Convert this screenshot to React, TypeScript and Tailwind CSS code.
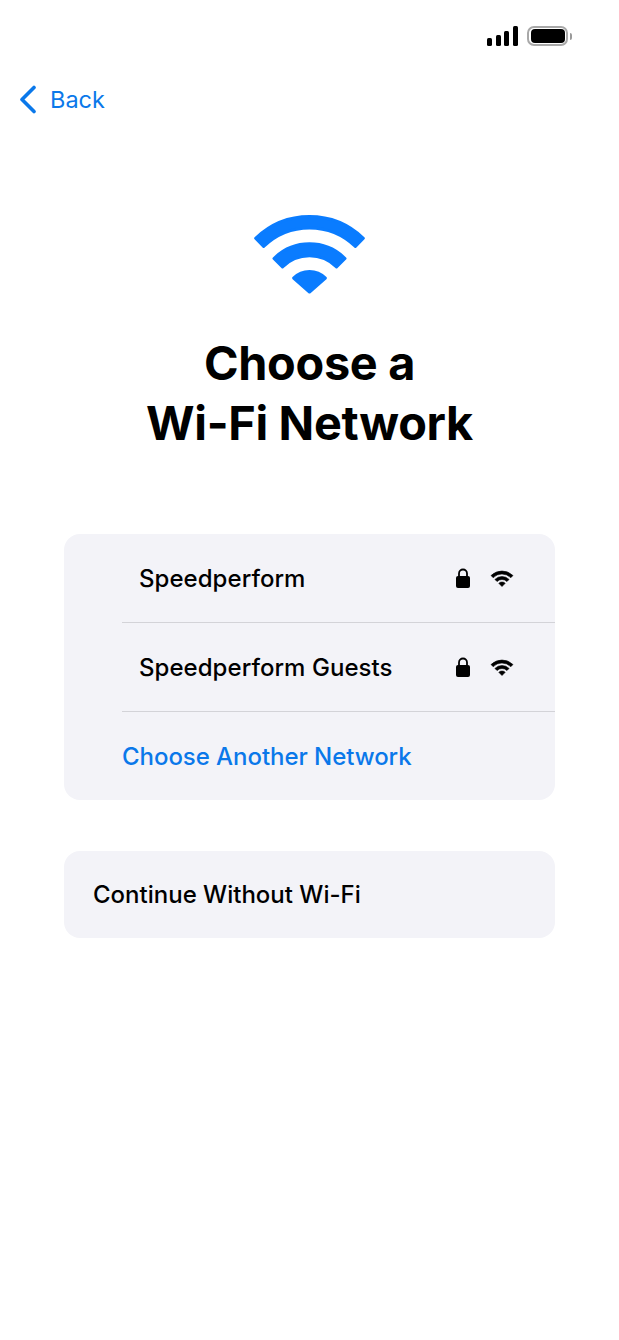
const font = { fontFamily: 'Inter, "Liberation Sans", sans-serif' };

function StatusBar() {
  return (
    <div className="flex h-[20px] items-end justify-end pr-[47px]">
      <div className="flex items-end gap-[3.67px]">
        <div className="h-[8px] w-[5px] rounded-[1.5px] bg-black" />
        <div className="h-[11px] w-[5px] rounded-[1.5px] bg-black" />
        <div className="h-[15px] w-[5px] rounded-[1.5px] bg-black" />
        <div className="h-[20px] w-[5px] rounded-[1.5px] bg-black" />
      </div>
      <div className="ml-[9px] flex h-[20px] w-[41px] items-center justify-center rounded-[7px] border-2 border-[#a8a8a8]">
        <div className="h-[14px] w-[34px] rounded-[4px] bg-black" />
      </div>
      <div className="mb-[6px] ml-[2px] h-[7px] w-[2px] rounded-r-[2px] bg-[#9a9a9a]" />
    </div>
  );
}

function BigWifi() {
  return (
    <svg width="115" height="86" viewBox="-2 -2 115 86" fill="#0a7cff" stroke="#0a7cff" strokeWidth="3" strokeLinejoin="round">
      <path d="M1.66 24.25A77.5 77.5 0 0 1 109.34 24.25L101.35 32.53A66 66 0 0 0 9.65 32.53Z" />
      <path d="M20 44.5A50.2 50.2 0 0 1 91 44.5L82.5 53A38.2 38.2 0 0 0 28.5 53Z" />
      <path d="M39.6 64.1A22.5 22.5 0 0 1 71.4 64.1L55.5 78Z" />
    </svg>
  );
}

function SmallWifi() {
  return (
    <svg width="22" height="17" viewBox="0 0 22 17" fill="#000" stroke="#000" strokeWidth="0.6" strokeLinejoin="round" className="overflow-visible">
      <path d="M0.04 5.54A15.5 15.5 0 0 1 21.96 5.54L19.84 7.66A12.5 12.5 0 0 0 2.16 7.66Z" />
      <path d="M3.93 9.43A10 10 0 0 1 18.07 9.43L15.95 11.55A7 7 0 0 0 6.05 11.55Z" />
      <path d="M7.82 13.32A4.5 4.5 0 0 1 14.18 13.32L11 16.5Z" />
    </svg>
  );
}

function Lock() {
  return (
    <svg width="14" height="20" viewBox="0 0 14 20">
      <path d="M3 9V5.5a4 4 0 0 1 8 0V9" fill="none" stroke="#000" strokeWidth="1.8" />
      <rect x="0" y="8" width="14" height="12" rx="2" fill="#000" />
    </svg>
  );
}

function NetworkRow({ name }: { name: string }) {
  return (
    <div className="ml-[58px] flex h-[89px] items-center border-b border-[#d3d3d8] pl-[17px]">
      <span className="flex-1 pt-[2px] text-[24px] font-medium tracking-[0.05px] text-black">{name}</span>
      <Lock />
      <div className="ml-[21px] mr-[42px]">
        <SmallWifi />
      </div>
    </div>
  );
}

export default function App() {
  return (
    <div className="flex h-[1340px] w-[619px] flex-col bg-white pt-[26px]" style={font}>
      <StatusBar />

      {/* Back */}
      <div className="mt-[39px] flex h-[29px] items-center pl-[19px] text-[#0a78ea]">
        <svg width="18" height="29" viewBox="0 0 18 29" fill="none" stroke="currentColor" strokeWidth="3.6" strokeLinecap="round" strokeLinejoin="round">
          <path d="M15 2.5L3 14.5L15 26.5" />
        </svg>
        <span className="ml-[13px] text-[23.5px]">Back</span>
      </div>

      <div className="mt-[98px] flex justify-center">
        <BigWifi />
      </div>

      <h1 className="mt-[35px] text-center text-[46.8px] font-bold leading-[60px] tracking-[-0.3px] text-black">
        Choose a
        <br />
        Wi-Fi Network
      </h1>

      <div className="mx-[64px] mt-[81px] rounded-[16px] bg-[#f3f3f8]">
        <NetworkRow name="Speedperform" />
        <NetworkRow name="Speedperform Guests" />
        <div className="flex h-[88px] items-center pl-[58px] pt-[1px] text-[24px] font-medium tracking-[-0.05px] text-[#0a78ea]">
          Choose Another Network
        </div>
      </div>

      <div className="mx-[64px] mt-[51px] flex h-[87px] items-center rounded-[16px] bg-[#f3f3f8] pl-[29px] text-[24px] font-medium text-black">
        Continue Without Wi-Fi
      </div>
    </div>
  );
}
